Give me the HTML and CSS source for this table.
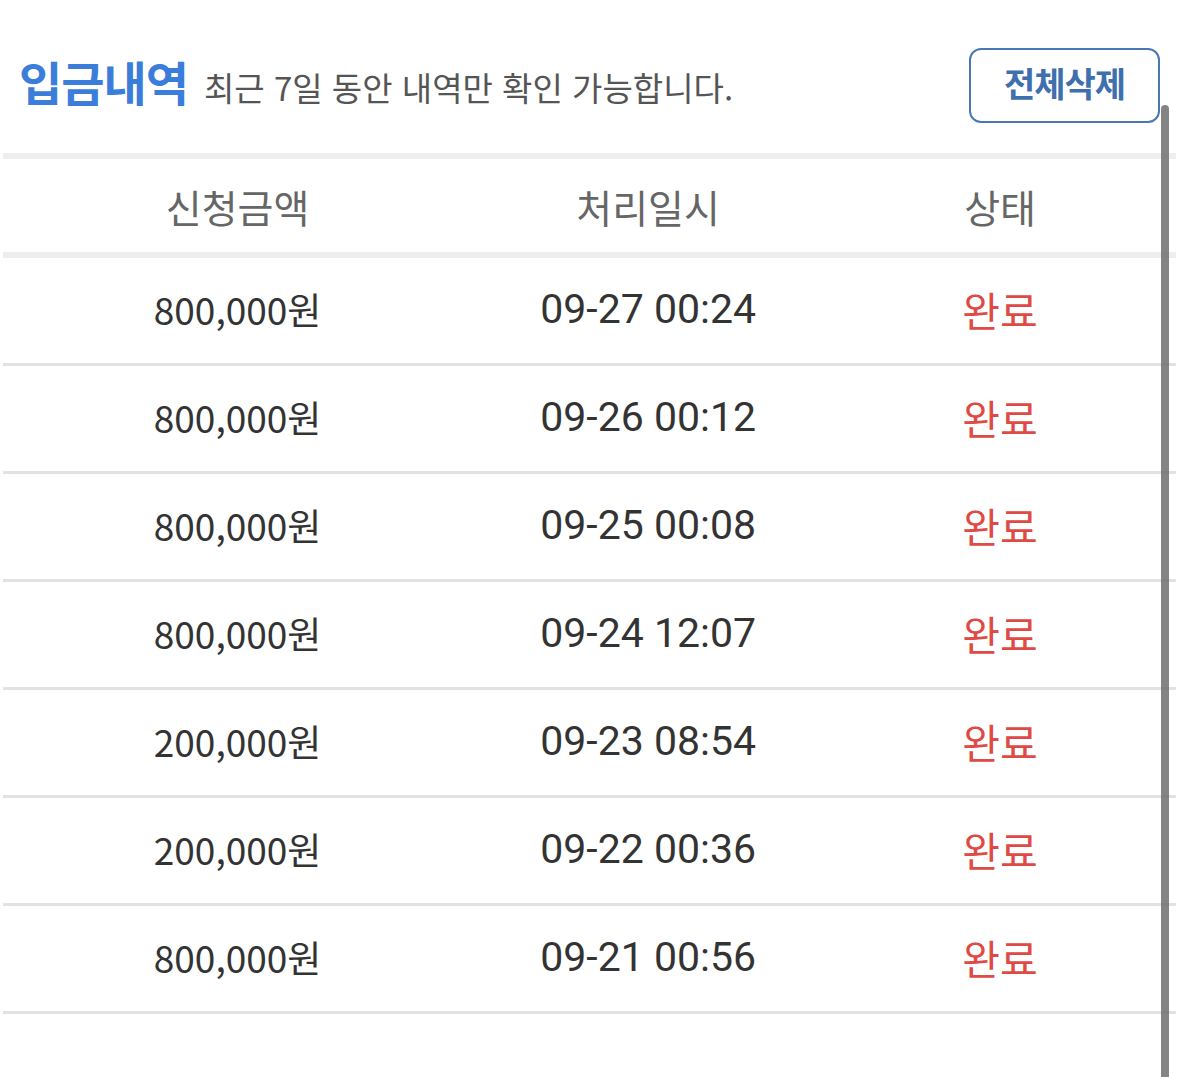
FILE: index.html
```html
<!DOCTYPE html>
<html lang="ko">
<head>
<meta charset="utf-8">
<title>입금내역</title>
<link rel="stylesheet" href="styles.css">
</head>
<body>
<div class="page">
  <div class="head">
    <div class="title-wrap">
      <h1 class="title">입금내역</h1>
      <span class="subtitle">최근 7일 동안 내역만 확인 가능합니다.</span>
    </div>
    <button class="btn-delete" type="button">전체삭제</button>
  </div>
  <table class="list">
    <thead>
      <tr>
        <th class="c1">신청금액</th>
        <th class="c2">처리일시</th>
        <th class="c3">상태</th>
      </tr>
    </thead>
    <tbody>
      <tr><td>800,000원</td><td class="time">09-27 00:24</td><td class="done">완료</td></tr>
      <tr><td>800,000원</td><td class="time">09-26 00:12</td><td class="done">완료</td></tr>
      <tr><td>800,000원</td><td class="time">09-25 00:08</td><td class="done">완료</td></tr>
      <tr><td>800,000원</td><td class="time">09-24 12:07</td><td class="done">완료</td></tr>
      <tr><td>200,000원</td><td class="time">09-23 08:54</td><td class="done">완료</td></tr>
      <tr><td>200,000원</td><td class="time">09-22 00:36</td><td class="done">완료</td></tr>
      <tr><td>800,000원</td><td class="time">09-21 00:56</td><td class="done">완료</td></tr>
    </tbody>
  </table>
  <div class="scrollbar"></div>
</div>
</body>
</html>
```
FILE: styles.css
```css
html, body {
  margin: 0;
  padding: 0;
  background: #fff;
}
body {
  font-family: "Noto Sans CJK KR", "Noto Sans", sans-serif;
  overflow: hidden;
  height: 1077px;
}
.page {
  position: relative;
  padding: 0 3px;
}
.head {
  display: flex;
  align-items: center;
  justify-content: space-between;
  padding: 48px 16px 30px 16px;
}
.title-wrap {
  display: flex;
  align-items: baseline;
  gap: 16px;
  margin-bottom: 8px;
}
.title {
  margin: 0;
  font-size: 47px;
  line-height: 1.2;
  font-weight: 700;
  color: #3b7ddb;
  letter-spacing: -1px;
}
.subtitle {
  font-size: 33px;
  color: #555;
}
.btn-delete {
  width: 191px;
  height: 75px;
  border: 2.5px solid #4a78b5;
  border-radius: 12px;
  background: #fff;
  color: #3f6fad;
  font-family: inherit;
  font-size: 34px;
  font-weight: 700;
  letter-spacing: -1px;
  padding: 0 0 6px 0;
}
.list {
  width: 100%;
  border-collapse: collapse;
  border-top: 6px solid #eeeeee;
  table-layout: fixed;
}
.list th {
  height: 93px;
  padding: 0;
  font-weight: 400;
  font-size: 39px;
  line-height: 50px;
  color: #666;
  border-bottom: 6px solid #eeeeee;
}
.c1 { width: 40%; }
.c2 { width: 30%; }
.c3 { width: 30%; }
.list td {
  height: 101px;
  padding: 0 0 4px 0;
  text-align: center;
  vertical-align: middle;
  font-size: 37px;
  line-height: 50px;
  color: #333;
  border-bottom: 3px solid #e2e2e2;
}
.list td.time {
  font-family: Roboto, "Noto Sans CJK KR", sans-serif;
  font-size: 41px;
}
.list td.done {
  font-size: 41px;
  color: #e04a45;
}
.scrollbar {
  position: absolute;
  top: 105px;
  right: 10px;
  width: 8px;
  height: 1000px;
  border-radius: 4px;
  background: rgba(110, 110, 110, 0.85);
}
```
